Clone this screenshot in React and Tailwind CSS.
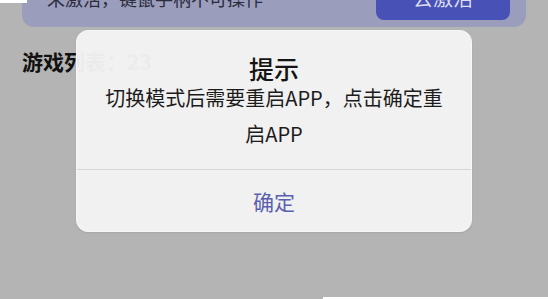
export default function App() {
  const font = { fontFamily: '"Noto Sans CJK SC", "Noto Sans", sans-serif' };
  return (
    <div
      className="relative w-[548px] h-[299px] overflow-hidden bg-[#b4b4b4] flex flex-col"
      style={font}
    >
      <div className="absolute top-0 left-0 w-[27px] h-[3px] bg-white" />
      <div className="mx-[22px] -mt-[24px] h-[51px] rounded-[12px] bg-[#9a9dbc] flex items-center justify-between pl-[25px] pr-[16px]">
        <span className="text-[18px] leading-[24px] text-[#2b2c3c] -mt-[8px]">未激活，键鼠手柄不可操作</span>
        <div className="w-[134px] h-[37px] rounded-[8px] bg-[#4751b6] flex items-center justify-center">
          <span className="text-[20px] leading-[24px] text-[#dcdef0] -mt-[7px]">去激活</span>
        </div>
      </div>
      <div className="pl-[22px] mt-[21px] text-[21px] leading-[26px] font-bold text-[#111]">
        游戏列表：23
      </div>
      <div className="mt-auto h-[2px] flex">
        <div className="ml-[323px] flex-1 bg-white" />
      </div>

      <div className="absolute top-[30px] left-1/2 -translate-x-1/2 w-[396px] h-[202px] rounded-[12px] bg-[#f3f3f3]/[0.97] border border-[#f7f7f7] shadow-[0_1px_2px_rgba(0,0,0,0.08)] flex flex-col">
        <div className="pt-[22px] text-center text-[25px] leading-[30px] font-medium text-[#141414]">
          提示
        </div>
        <div className="flex flex-col gap-[6px] text-center text-[20px] leading-[30px] text-[#1c1c1c]">
          <div>切换模式后需要重启APP，点击确定重</div>
          <div>启APP</div>
        </div>
        <div className="mt-auto h-[62px] border-t border-[#d6d6d6] flex items-center justify-center">
          <span className="text-[21px] leading-[26px] text-[#5a60ae]">确定</span>
        </div>
      </div>
    </div>
  );
}
